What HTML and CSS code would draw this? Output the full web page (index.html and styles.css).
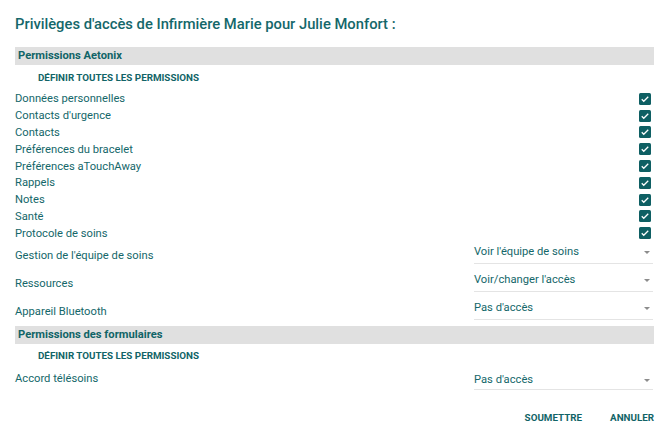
FILE: index.html
```html
<!DOCTYPE html>
<html lang="fr">
<head>
<meta charset="utf-8">
<title>Privilèges d'accès</title>
<link rel="stylesheet" href="styles.css">
</head>
<body>
<div class="page">
  <h1 class="title">Privilèges d'accès de Infirmière Marie pour Julie Monfort :</h1>

  <div class="band">Permissions Aetonix</div>
  <div class="setall">DÉFINIR TOUTES LES PERMISSIONS</div>

  <div class="check-row"><span>Données personnelles</span><span class="box"><svg viewBox="0 0 24 24"><path d="M5.5 12.5l4 4L18.5 7.5"/></svg></span></div>
  <div class="check-row"><span>Contacts d'urgence</span><span class="box"><svg viewBox="0 0 24 24"><path d="M5.5 12.5l4 4L18.5 7.5"/></svg></span></div>
  <div class="check-row"><span>Contacts</span><span class="box"><svg viewBox="0 0 24 24"><path d="M5.5 12.5l4 4L18.5 7.5"/></svg></span></div>
  <div class="check-row"><span>Préférences du bracelet</span><span class="box"><svg viewBox="0 0 24 24"><path d="M5.5 12.5l4 4L18.5 7.5"/></svg></span></div>
  <div class="check-row"><span>Préférences aTouchAway</span><span class="box"><svg viewBox="0 0 24 24"><path d="M5.5 12.5l4 4L18.5 7.5"/></svg></span></div>
  <div class="check-row"><span>Rappels</span><span class="box"><svg viewBox="0 0 24 24"><path d="M5.5 12.5l4 4L18.5 7.5"/></svg></span></div>
  <div class="check-row"><span>Notes</span><span class="box"><svg viewBox="0 0 24 24"><path d="M5.5 12.5l4 4L18.5 7.5"/></svg></span></div>
  <div class="check-row"><span>Santé</span><span class="box"><svg viewBox="0 0 24 24"><path d="M5.5 12.5l4 4L18.5 7.5"/></svg></span></div>
  <div class="check-row"><span>Protocole de soins</span><span class="box"><svg viewBox="0 0 24 24"><path d="M5.5 12.5l4 4L18.5 7.5"/></svg></span></div>

  <div class="select-row"><span class="label">Gestion de l'équipe de soins</span><div class="select"><span>Voir l'équipe de soins</span><span class="caret"></span></div></div>
  <div class="select-row"><span class="label">Ressources</span><div class="select"><span>Voir/changer l'accès</span><span class="caret"></span></div></div>
  <div class="select-row"><span class="label">Appareil Bluetooth</span><div class="select"><span>Pas d'accès</span><span class="caret"></span></div></div>

  <div class="band band--second">Permissions des formulaires</div>
  <div class="setall setall--second">DÉFINIR TOUTES LES PERMISSIONS</div>

  <div class="select-row select-row--compact"><span class="label">Accord télésoins</span><div class="select"><span>Pas d'accès</span><span class="caret"></span></div></div>

  <div class="actions">
    <span class="btn">SOUMETTRE</span>
    <span class="btn">ANNULER</span>
  </div>
</div>
</body>
</html>
```

FILE: styles.css
```css
* { box-sizing: border-box; }

html, body {
  margin: 0;
  padding: 0;
  background: #ffffff;
}

body {
  font-family: Roboto, "Liberation Sans", Arial, sans-serif;
  color: #14676a;
  font-size: 11.2px;
}

.page {
  padding: 0 16px 0 15px;
}

.title {
  margin: 0;
  padding-top: 14px;
  height: 33px;
  line-height: 20px;
  font-size: 14.75px;
  font-weight: 500;
  color: #14676a;
}

.band {
  margin-top: 14px;
  height: 17.5px;
  line-height: 17.5px;
  background: #e0e0e0;
  padding-left: 3px;
  font-weight: 700;
  font-size: 11.2px;
  color: #116467;
}

.band--second {
  margin-top: 0;
  height: 18px;
  line-height: 18px;
}

.setall {
  height: 26px;
  line-height: 26px;
  padding-left: 23px;
  font-weight: 700;
  font-size: 9.8px;
  color: #116467;
}

.setall--second {
  height: 24px;
  line-height: 24px;
}

.check-row {
  height: 16.8px;
  display: flex;
  align-items: center;
  justify-content: space-between;
}

.box {
  width: 12px;
  height: 12px;
  margin-right: 3px;
  border-radius: 1.5px;
  background: #0e5f63;
  display: flex;
}

.box svg {
  width: 12px;
  height: 12px;
  fill: none;
  stroke: #ffffff;
  stroke-width: 2.6;
}

.select-row {
  height: 28px;
  display: flex;
  align-items: center;
  justify-content: space-between;
}

.select {
  align-self: flex-start;
  width: 179px;
  margin-right: 1px;
  height: 22px;
  padding-top: 2px;
  line-height: 16px;
  border-bottom: 1px solid #e4e4e4;
  display: flex;
  justify-content: space-between;
  color: #14676a;
}

.select-row--compact {
  height: 22px;
}

.select-row--compact .select {
  padding-top: 4px;
}

.caret {
  width: 0;
  height: 0;
  margin-top: 7px;
  margin-right: 3px;
  border-left: 3.5px solid transparent;
  border-right: 3.5px solid transparent;
  border-top: 3.5px solid #8c8c8c;
}

.actions {
  margin-top: 18px;
  display: flex;
  justify-content: flex-end;
  gap: 28px;
  line-height: 20px;
}

.btn {
  font-weight: 700;
  font-size: 9.8px;
  color: #116467;
}
```
